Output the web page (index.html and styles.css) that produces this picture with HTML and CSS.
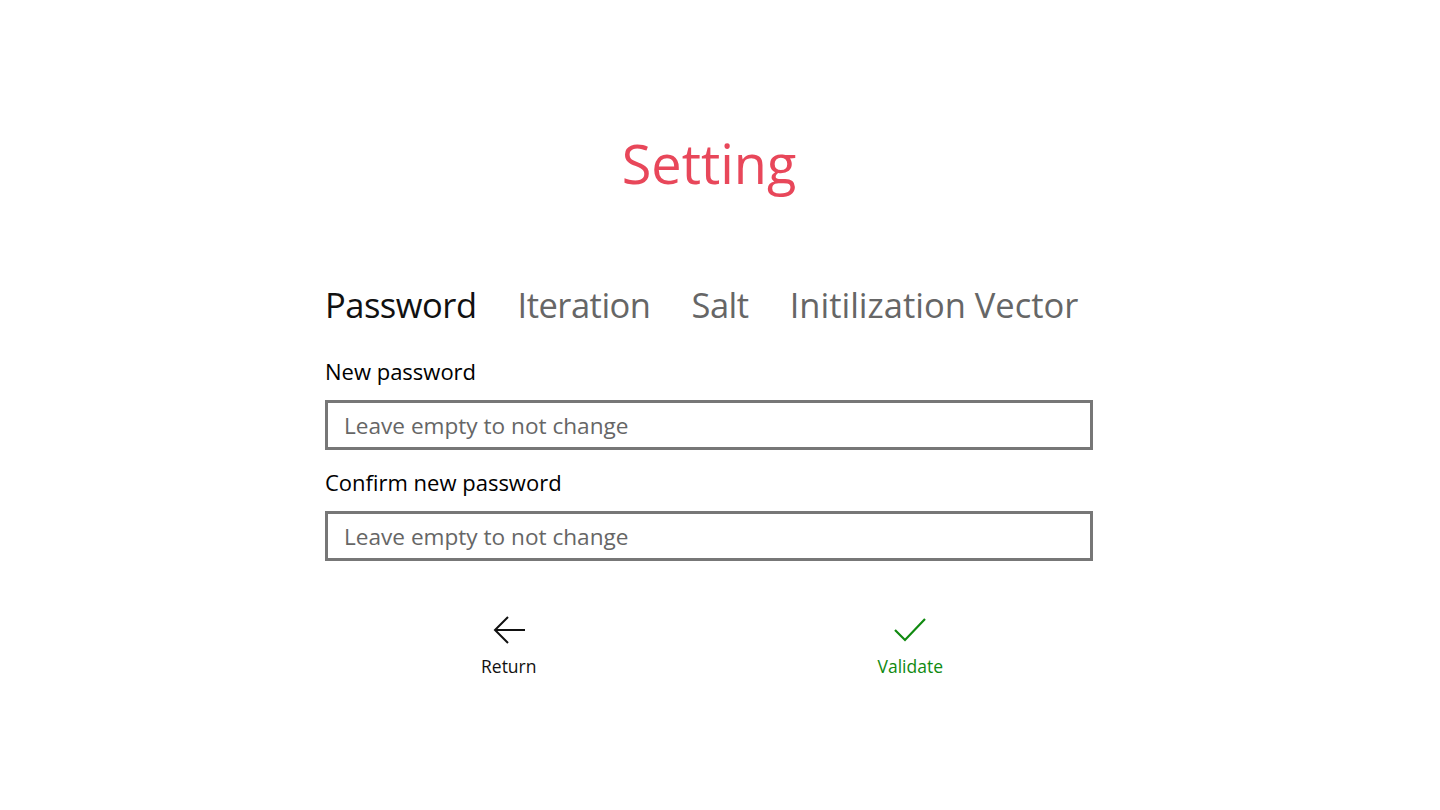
FILE: index.html
```html
<!DOCTYPE html>
<html lang="en">
<head>
    <meta charset="UTF-8">
    <meta name="viewport" content="width=device-width, initial-scale=1.0">
    <title>Setting</title>
    <link rel="stylesheet" href="styles.css">
</head>
<body>
    <div class="page">
        <h1 class="title">Setting</h1>
        <div class="container">
            <div class="tabs">
                <span class="tab active">Password</span>
                <span class="tab">Iteration</span>
                <span class="tab">Salt</span>
                <span class="tab">Initilization Vector</span>
            </div>
            <div class="field">
                <label for="newPassword">New password</label>
                <input type="password" id="newPassword" placeholder="Leave empty to not change">
            </div>
            <div class="field">
                <label for="confirmPassword">Confirm new password</label>
                <input type="password" id="confirmPassword" placeholder="Leave empty to not change">
            </div>
            <div class="actions">
                <button class="action">
                    <svg width="34" height="30" viewBox="0 0 34 30" fill="none" stroke="currentColor" stroke-width="2">
                        <path d="M33 15H3M16 2L3 15l13 13"/>
                    </svg>
                    <span>Return</span>
                </button>
                <button class="action validate">
                    <svg width="34" height="30" viewBox="0 0 34 30" fill="none" stroke="currentColor" stroke-width="2.2">
                        <path d="M2 15l10 10L32 4"/>
                    </svg>
                    <span>Validate</span>
                </button>
            </div>
        </div>
    </div>
</body>
</html>
```
FILE: styles.css
```css
body {
    margin: 0;
    background-color: #fff;
    font-family: 'Open Sans', 'Noto Sans', sans-serif;
    color: #000;
}
.page {
    display: flex;
    flex-direction: column;
    align-items: center;
    padding-right: 22px;
    padding-top: 123px;
}
.title {
    margin: 0;
    font-size: 54px;
    font-weight: 400;
    color: #e8475a;
    line-height: 80px;
}
.container {
    width: 768px;
    margin-top: 77px;
}
.tabs {
    display: flex;
    gap: 41px;
    font-size: 34.5px;
    line-height: 50px;
    letter-spacing: -0.5px;
}
.tab {
    color: #666;
}
.tab.active {
    color: #111;
}
.tab:last-child {
    letter-spacing: 0;
}
.field {
    margin-top: 24px;
}
.field + .field {
    margin-top: 15px;
}
.field label {
    display: block;
    font-size: 22px;
    line-height: 34px;
    margin-bottom: 12px;
}
.field input {
    display: block;
    width: 100%;
    height: 50px;
    box-sizing: border-box;
    border: 3px solid #777;
    padding: 0 16px;
    font-family: inherit;
    font-size: 22.6px;
    outline: none;
}
.field input::placeholder {
    color: #666;
}
.actions {
    display: flex;
    justify-content: space-between;
    padding: 0 150px 0 156px;
    margin-top: 54px;
}
.action {
    background: none;
    border: none;
    padding: 0;
    display: flex;
    flex-direction: column;
    align-items: center;
    gap: 9px;
    font-family: inherit;
    font-size: 17.5px;
    color: #111;
    cursor: pointer;
}
.action.validate {
    color: #108a10;
}
```
